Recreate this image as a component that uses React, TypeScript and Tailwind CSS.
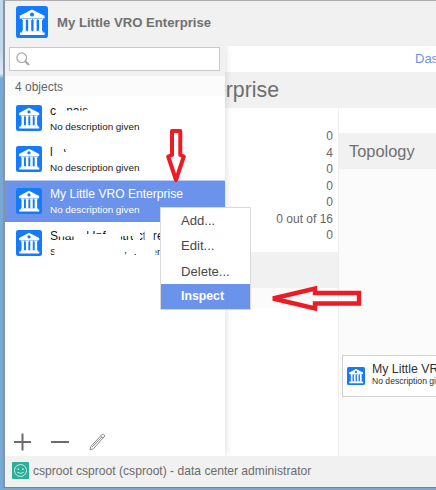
import React from "react";

function BankIcon({ className }: { className: string }) {
  return (
    <svg viewBox="0 0 32 32" className={className}>
      <rect width="32" height="32" rx="2.8" fill="#147cfc" />
      <g fill="#fff">
        <path fillRule="evenodd" d="M16 3.5 L28.5 9.8 V12.6 H3.8 V9.8 Z M16 6.6 a2 2 0 1 0 0.01 0 Z" />
        <path d="M6 13h4.6v1h-.8v10.7h.8v.8H6v-.8h.8V14H6zM11.4 13H16v1h-.8v10.7h.8v.8h-4.6v-.8h.8V14h-.8zM16.8 13h4.6v1h-.8v10.7h.8v.8h-4.6v-.8h.8V14h-.8zM22.2 13h4.6v1H26v10.7h.8v.8h-4.6v-.8h.8V14h-.8z" />
        <path d="M6 25.2h20.6v1.2h2V29H4v-2.6h2z" />
      </g>
    </svg>
  );
}

type Item = { title: string; note: string; selected?: boolean; hidden?: string };

const items: Item[] = [
  {
    title: "co nais",
    note: "No description given",
    hidden: "M56 0H67V18H56Z M64 13.5H95V20H64Z M66 0H84V9.5H66Z M49 0H58V9H49Z",
  },
  {
    title: "la-v",
    note: "No description given",
    hidden: "M53 0H63.5V19H53Z M62 13H75V19H62Z M67 0H75V19H67Z M65 19H69V26H65Z",
  },
  { title: "My Little VRO Enterprise", note: "No description given", selected: true },
  {
    title: "Shared Infrastructure",
    note: "Shared cloud environment",
    hidden:
      "M57.5 3H74V13.5H57.5Z M74 0H87V20H74Z M87 11H107V20H87Z M87 0H107V8H87Z M106 0H121V20H106Z M120 0H133V13H120Z M133 0H140V20H133Z M144.5 0H153.5V20H144.5Z M54.5 21H125V38H54.5Z M127 21H134.5V38H127Z M125 21H137V29H125Z M136 21H155.5V38H136Z",
  },
];

function Row({ item }: { item: Item }) {
  return (
    <div
      className={
        "relative flex h-[42px] items-start overflow-hidden border-t pl-[11px] pt-[7px] first:pt-2 " +
        (item.selected ? "border-[#b9caf5] bg-[#6b93ec] text-white" : "border-white text-[#181818]")
      }
    >
      <BankIcon className="size-[26px] shrink-0" />
      <div className="ml-2 whitespace-nowrap">
        <div className="-mt-px text-[12.1px] leading-[14px]">{item.title}</div>
        <div className="mt-[3px] text-[9.9px] leading-[11px]">{item.note}</div>
      </div>
      {item.hidden && (
        <svg viewBox="5 0 220 41" className="absolute left-0 top-0 h-[41px] w-[220px]">
          <path d={item.hidden} fill="#fff" />
        </svg>
      )}
    </div>
  );
}

const counts = ["0", "4", "0", "0", "0", "0 out of 16", "0"];

export default function App() {
  return (
    <div className="relative h-[490px] w-[436px] overflow-hidden bg-[#8eb1d9] bg-linear-to-b from-[#c3d7ea] from-10% via-[#dde9f4] via-15% to-[#78a8d4] to-16% font-['Liberation_Sans',Arial,sans-serif]">
      <div className="ml-[3px] flex h-[488px] w-[433px] flex-col border-b border-l-2 border-t border-b-[#71839b] border-l-[#8493a8] border-t-[#adadad] bg-white">
        <header className="flex h-[45px] shrink-0 items-center bg-[#f1f1f1] pb-[3px] pl-[11px]">
          <BankIcon className="size-8" />
          <h1 className="ml-[9px] mt-0.5 text-[13.15px] font-bold text-[#707070]">My Little VRO Enterprise</h1>
        </header>

        <div className="flex h-[410px] shrink-0 overflow-hidden">
          <aside className="z-10 flex w-[220px] shrink-0 flex-col bg-white shadow-[1px_0_7px_rgba(0,0,0,0.13)]">
            <div className="h-[30px] shrink-0 bg-[#f1f1f1] pl-1 pr-[5px] pt-px">
              <div className="flex h-6 items-center border border-[#c9c9c9] bg-white pl-1.5">
                <svg viewBox="0 0 14 14" className="size-[14px]" fill="none" stroke="#a3a3a3">
                  <circle cx="5.7" cy="5.7" r="4.8" strokeWidth="1.2" />
                  <path d="M9 9l4 4" strokeWidth="2" />
                </svg>
              </div>
            </div>
            <div className="flex h-[21px] shrink-0 items-center bg-[#fbfbfb] pl-[10px] text-[12px] text-[#666]">4 objects</div>
            <div className="-mt-px">
              {items.map((item) => (
                <Row key={item.title} item={item} />
              ))}
            </div>
            <svg viewBox="0 0 100 20" className="mb-1 ml-[7px] mt-auto h-5 w-[100px]" fill="none">
              <path d="M2 10H19M10.5 1.5V18.5M39 10H57" stroke="#6b6b6b" strokeWidth="2" />
              <path d="M78 18l.8-3.4L90 2.4q2-1 2.8 1.6L81.5 16.6zM88.6 4l2.6 2.4M80 15.2L90 4.8" stroke="#8c8c8c" />
            </svg>
          </aside>

          <main className="flex w-[211px] flex-col overflow-hidden">
            <nav className="flex h-[26px] shrink-0 items-center whitespace-nowrap pl-[190px] text-[13px] text-[#6b93ec]">Dashboard</nav>
            <div className="flex h-9 shrink-0 items-center bg-[#f1f1f1]">
              <h2 className="flex w-[54px] justify-end whitespace-nowrap pt-0.5 text-[21.3px] text-[#6e6e6e]">My Little VRO Enterprise</h2>
            </div>
            <div className="flex grow">
              <section className="flex w-[114px] shrink-0 flex-col border-r border-[#ededed]">
                <ul className="h-36 pr-[5px] pt-5 text-right text-[12px] text-[#666]">
                  {counts.map((count, i) => (
                    <li key={i} className="h-[16.5px] leading-[17px]">{count}</li>
                  ))}
                </ul>
                <div className="h-9 bg-[#f1f1f1]" />
                <div className="h-[20px] bg-[#fbfbfb]" />
              </section>
              <section className="flex grow flex-col bg-[#fbfbfb]">
                <div className="h-[25px] bg-white" />
                <h3 className="flex h-9 items-center bg-[#f1f1f1] pl-[10px] text-[16.4px] text-[#707070]">Topology</h3>
                <div className="ml-[3px] mt-[186px] flex h-[42px] w-[140px] items-center border border-[#d0d0d0] bg-white pl-1">
                  <BankIcon className="size-[18px] shrink-0" />
                  <div className="-mt-1 ml-[7px] whitespace-nowrap text-[#303030]">
                    <div className="text-[12.3px] leading-[14px]">My Little VRO Enterprise</div>
                    <div className="text-[8.6px] leading-[11px]">No description given</div>
                  </div>
                </div>
              </section>
            </div>
          </main>
        </div>

        <footer className="flex h-[31px] shrink-0 items-center bg-[#f1f1f1] pl-[7px] text-[12.1px] text-[#6b6b6b]">
          <svg viewBox="0 0 17 17" className="-mt-0.5 size-[17px]" fill="none">
            <rect width="17" height="17" rx="1" fill="#2caf98" />
            <circle cx="8.5" cy="8.5" r="6" stroke="#c5f2e9" />
            <path d="M5.4 10.4q3.1 2 6.2 0" stroke="#c5f2e9" />
            <path d="M5.5 6.5h1.6v1.4H5.5zM10 6.5h1.6v1.4H10z" fill="#d8fff7" />
          </svg>
          <span className="ml-1">csproot csproot (csproot) - data center administrator</span>
        </footer>
      </div>

      <ul className="absolute left-40 top-[207px] z-20 h-[103px] w-[91px] border border-[#d9d9d9] bg-white text-[13.1px] text-[#484848]">
        <li className="flex h-[25px] items-center pl-5">Add...</li>
        <li className="flex h-[26px] items-center pl-5">Edit...</li>
        <li className="flex h-[25px] items-center pl-5">Delete...</li>
        <li className="flex h-[25px] items-center bg-[#6b93ec] pl-5 text-[12.3px] font-bold text-white">Inspect</li>
      </ul>

      <svg viewBox="0 0 436 490" className="pointer-events-none absolute inset-0 z-30" fill="none" stroke="#ed1c24" strokeWidth="4">
        <path fill="#fff" strokeLinejoin="round" d="M172 131H180.3V155L183.8 156.5L176 180L168.2 156.5L172 155Z" />
        <path strokeWidth="4.4" d="M273 298.5L315 288.5V293H359V303.5H315V308.5Z" />
      </svg>
    </div>
  );
}
